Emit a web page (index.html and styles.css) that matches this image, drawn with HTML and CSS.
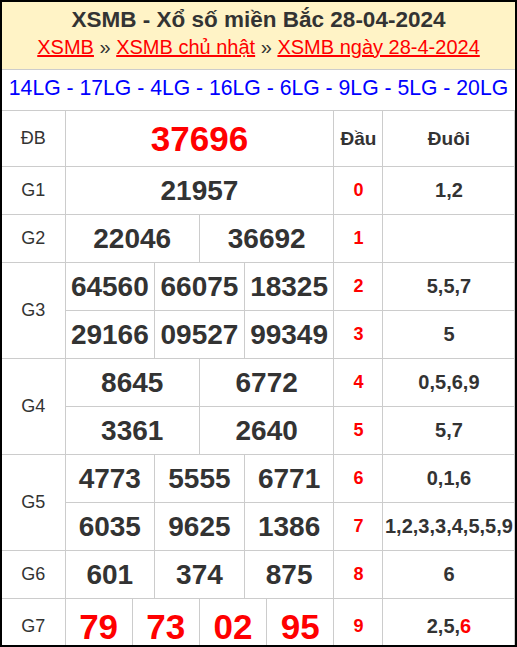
FILE: index.html
```html
<!DOCTYPE html>
<html lang="vi">
<head>
<meta charset="utf-8">
<title>XSMB 28-04-2024</title>
<link rel="stylesheet" href="styles.css">
</head>
<body>
<div class="box">
  <div class="header">
    <h1 class="title">XSMB - Xổ số miền Bắc 28-04-2024</h1>
    <div class="crumbs"><a href="#">XSMB</a> » <a href="#">XSMB chủ nhật</a> » <a href="#">XSMB ngày 28-4-2024</a></div>
  </div>
  <div class="lg">14LG - 17LG - 4LG - 16LG - 6LG - 9LG - 5LG - 20LG</div>
  <table class="kq">
    <colgroup>
      <col class="c-lbl">
      <col class="c-sub"><col class="c-sub"><col class="c-sub"><col class="c-sub">
      <col class="c-sub"><col class="c-sub"><col class="c-sub"><col class="c-sub">
      <col class="c-sub"><col class="c-sub"><col class="c-sub"><col class="c-sub">
      <col class="c-dau">
      <col class="c-duoi">
    </colgroup>
    <tr class="r-db">
      <td class="lbl">ĐB</td>
      <td colspan="12" class="num big red">37696</td>
      <td class="head">Đầu</td>
      <td class="head">Đuôi</td>
    </tr>
    <tr>
      <td class="lbl">G1</td>
      <td colspan="12" class="num">21957</td>
      <td class="dau">0</td>
      <td class="duoi">1,2</td>
    </tr>
    <tr>
      <td class="lbl">G2</td>
      <td colspan="6" class="num">22046</td>
      <td colspan="6" class="num">36692</td>
      <td class="dau">1</td>
      <td class="duoi"></td>
    </tr>
    <tr>
      <td class="lbl" rowspan="2">G3</td>
      <td colspan="4" class="num">64560</td>
      <td colspan="4" class="num">66075</td>
      <td colspan="4" class="num">18325</td>
      <td class="dau">2</td>
      <td class="duoi">5,5,7</td>
    </tr>
    <tr>
      <td colspan="4" class="num">29166</td>
      <td colspan="4" class="num">09527</td>
      <td colspan="4" class="num">99349</td>
      <td class="dau">3</td>
      <td class="duoi">5</td>
    </tr>
    <tr>
      <td class="lbl" rowspan="2">G4</td>
      <td colspan="6" class="num">8645</td>
      <td colspan="6" class="num">6772</td>
      <td class="dau">4</td>
      <td class="duoi">0,5,6,9</td>
    </tr>
    <tr>
      <td colspan="6" class="num">3361</td>
      <td colspan="6" class="num">2640</td>
      <td class="dau">5</td>
      <td class="duoi">5,7</td>
    </tr>
    <tr>
      <td class="lbl" rowspan="2">G5</td>
      <td colspan="4" class="num">4773</td>
      <td colspan="4" class="num">5555</td>
      <td colspan="4" class="num">6771</td>
      <td class="dau">6</td>
      <td class="duoi">0,1,6</td>
    </tr>
    <tr>
      <td colspan="4" class="num">6035</td>
      <td colspan="4" class="num">9625</td>
      <td colspan="4" class="num">1386</td>
      <td class="dau">7</td>
      <td class="duoi">1,2,3,3,4,5,5,9</td>
    </tr>
    <tr>
      <td class="lbl">G6</td>
      <td colspan="4" class="num">601</td>
      <td colspan="4" class="num">374</td>
      <td colspan="4" class="num">875</td>
      <td class="dau">8</td>
      <td class="duoi">6</td>
    </tr>
    <tr class="r-last">
      <td class="lbl">G7</td>
      <td colspan="3" class="num big red">79</td>
      <td colspan="3" class="num big red">73</td>
      <td colspan="3" class="num big red">02</td>
      <td colspan="3" class="num big red">95</td>
      <td class="dau">9</td>
      <td class="duoi">2,5,<span class="red">6</span></td>
    </tr>
  </table>
</div>
</body>
</html>
```

FILE: styles.css
```css
html, body {
  margin: 0;
  padding: 0;
  background: #000;
}
body {
  font-family: "Liberation Sans", Arial, sans-serif;
  color: #333;
}
.box {
  box-sizing: border-box;
  width: 517px;
  height: 647px;
  border: 2px solid #000;
  background: #fff;
  overflow: hidden;
}
.header {
  background: #fff3c6;
  border-bottom: 1px solid #ccc;
  padding: 5px 0 10px;
  text-align: center;
}
.title {
  margin: 0;
  font-size: 22.5px;
  line-height: 26px;
  font-weight: bold;
  color: #333;
}
.crumbs {
  margin-top: 2px;
  font-size: 20px;
  line-height: 24px;
  color: #333;
}
.crumbs a {
  color: #f00;
  text-decoration: underline;
}
.lg {
  height: 40px;
  box-sizing: border-box;
  padding-bottom: 4px;
  line-height: 36px;
  font-size: 21.2px;
  color: #00f;
  text-align: center;
  white-space: nowrap;
}
.kq {
  width: 513px;
  table-layout: fixed;
  border-collapse: collapse;
  border-top: 1px solid #ccc;
}
.c-lbl { width: 63px; }
.c-sub { width: 22.4167px; }
.c-dau { width: 49px; }
.c-duoi { width: 132px; }
.kq tr { height: 48px; }
.kq tr.r-db { height: 56px; }
.kq tr.r-last { height: 56px; }
.kq td {
  border: 1px solid #ccc;
  padding: 0;
  text-align: center;
  vertical-align: middle;
  white-space: nowrap;
  overflow: hidden;
}
.kq tr td:first-child { border-left: none; }
.lbl {
  font-size: 18px;
  color: #333;
}
.num {
  font-size: 28px;
  font-weight: bold;
  color: #333;
}
.num.big {
  font-size: 35px;
}
.red { color: #f00 !important; }
.head {
  font-size: 19px;
  font-weight: bold;
  color: #333;
}
.dau {
  font-size: 18px;
  font-weight: bold;
  color: #f00;
}
.duoi {
  font-size: 20px;
  font-weight: bold;
  color: #333;
}
```
